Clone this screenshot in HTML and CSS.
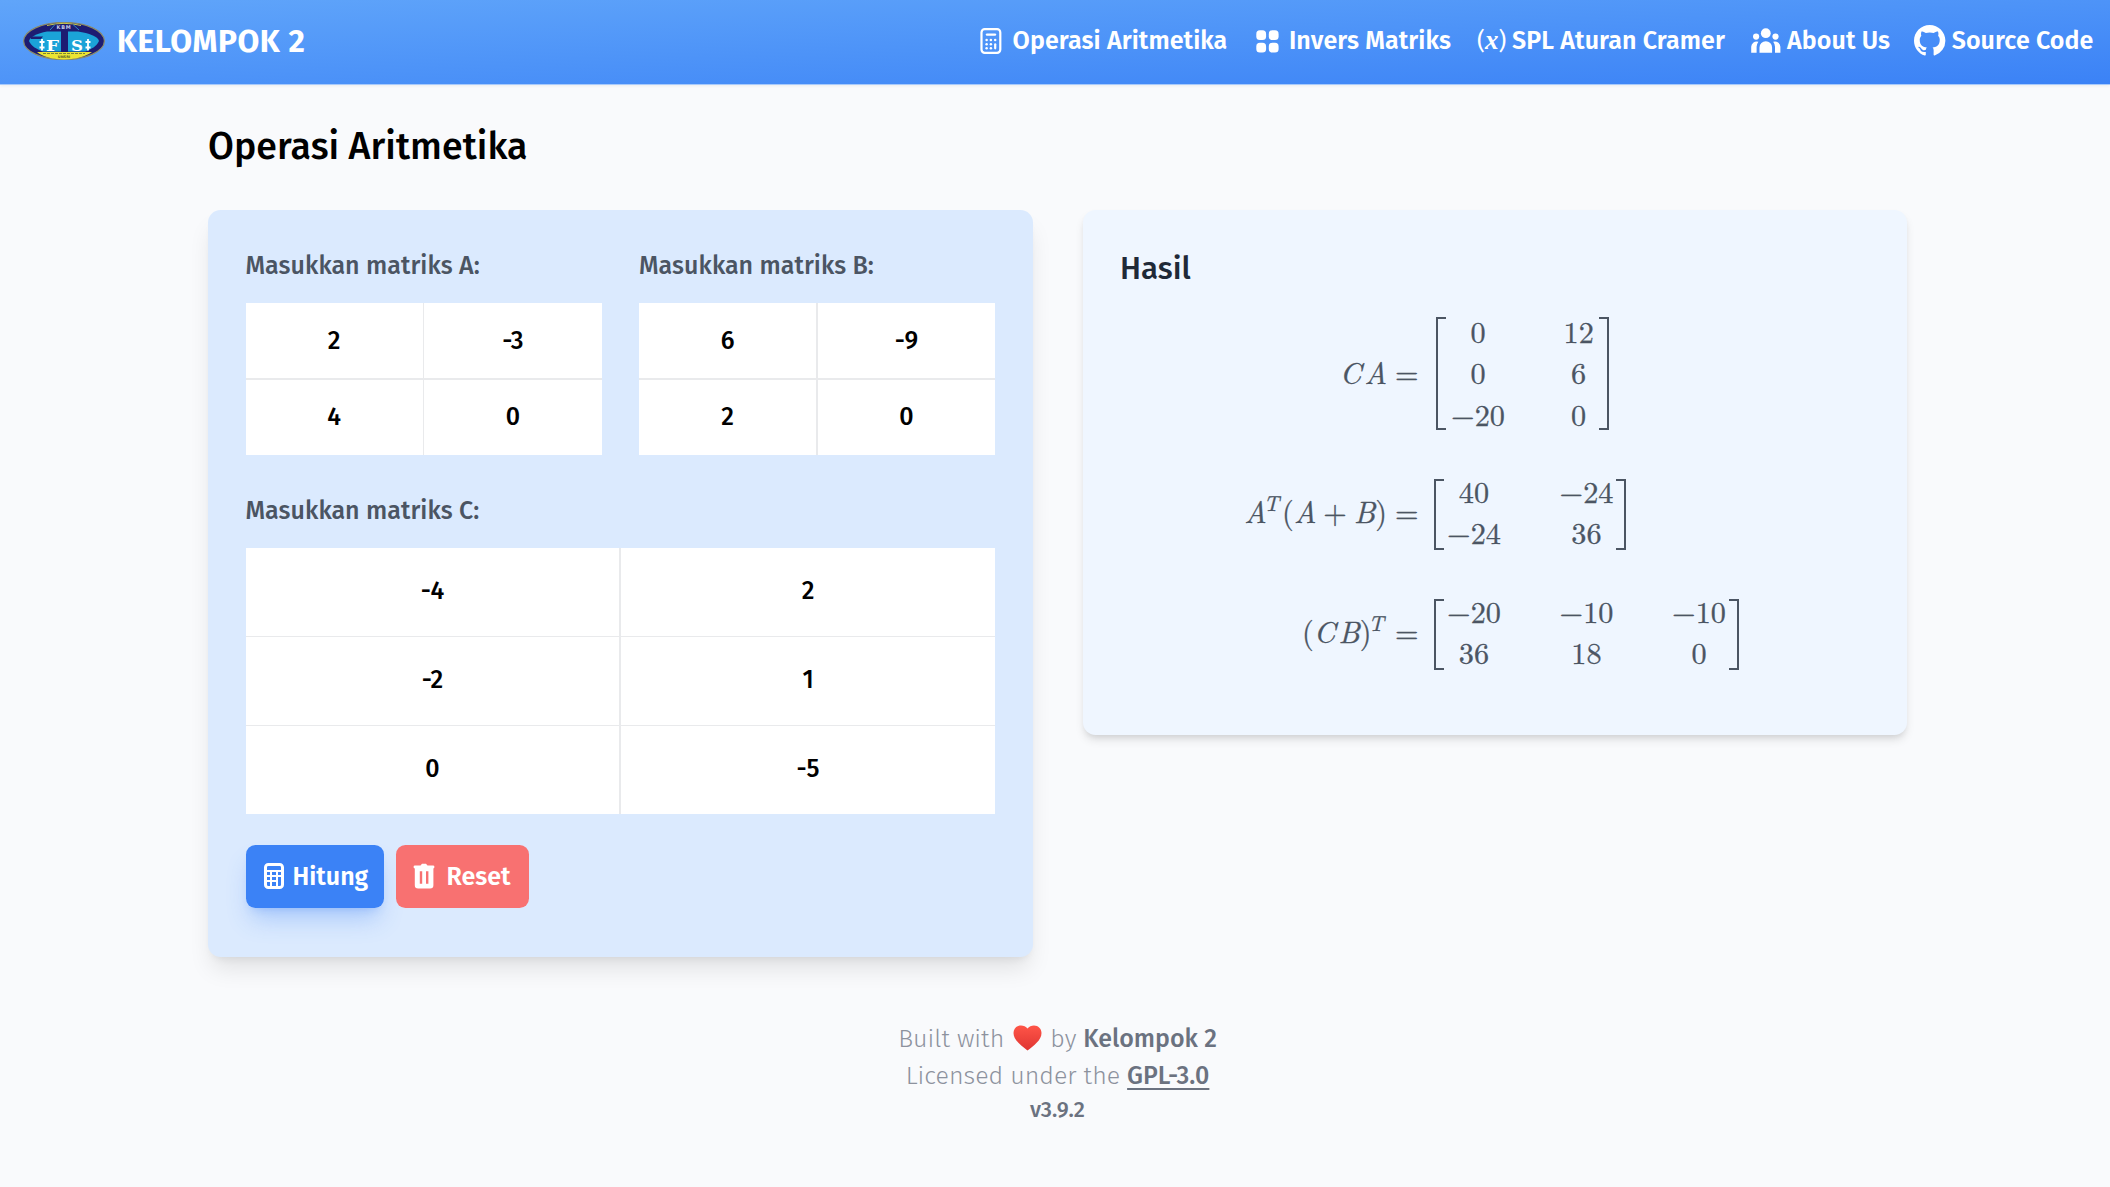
FILE: index.html
```html
<!DOCTYPE html>
<html lang="id">
<head>
<meta charset="utf-8">
<title>Operasi Aritmetika</title>
<link rel="stylesheet" href="styles.css">
</head>
<body>
<header class="nav">
  <a class="brand">
    <svg class="logo" viewBox="0 0 82 38">
      <ellipse cx="41" cy="19" rx="40.4" ry="18.6" fill="#1d1c72" stroke="#8b8a68" stroke-width="1.2"/>
      <path d="M24 3.5Q41-.8 58 3.500" fill="none" stroke="#c9c94a" stroke-width="1"/>
      <path d="M24 9.500C14 11.500 7 15 6 19c2 5 8 8.500 14 10.500h18V9.500z" fill="#1ba3d8"/>
      <path d="M45 9.500h10c11 1.500 20 5 21 9.500-2 5-8 8.500-14 10.500H45z" fill="#1ba3d8"/>
      <path d="M8 14.500h12l-2 2.500H8z" fill="#1d1c72"/>
      <path d="M27 8L32 2.500M56 8L50 2.500" stroke="#2d88c8" stroke-width="1"/>
      <path d="M14 30h55C61 35.500 51 37.400 41 37.400S21 35.500 14 30z" fill="#ece533"/>
      <path d="M20 31.500h42" stroke="#7b8535" stroke-width="1.200" stroke-dasharray="3 1"/>
      <path d="M38 8h7v21.500h-7z" fill="#1d1c72"/>
      <path d="M19 17v11.500M65 17v11.500" stroke="#fff" stroke-width="1.800"/>
      <path d="M16.500 20h5M16.500 25.500h5M62.500 20h5M62.500 25.500h5" stroke="#fff" stroke-width="2"/>
      <text class="logo-top" x="41" y="7.300">KBM</text>
      <text class="logo-letter" x="29.500" y="28.500" textLength="13" lengthAdjust="spacingAndGlyphs">F</text>
      <text class="logo-letter" x="54" y="28.500" textLength="12" lengthAdjust="spacingAndGlyphs">S</text>
      <text class="logo-bottom" x="41" y="36.300">UNSRI</text>
    </svg>
    <span class="brand-name">KELOMPOK 2</span>
  </a>
  <nav class="links">
    <a class="link link-calc">
      <svg width="22" height="26" viewBox="0 0 22 26"><rect x="1.500" y="1.200" width="18.800" height="23.600" rx="3.200" fill="none" stroke="#fff" stroke-width="2.200"/><path d="M7 6.600h8" stroke="#fff" stroke-width="2.400" stroke-linecap="round"/><g fill="#fff"><circle cx="6.600" cy="12" r="1.250"/><circle cx="10.900" cy="12" r="1.250"/><circle cx="15.200" cy="12" r="1.250"/><circle cx="6.600" cy="16.200" r="1.250"/><circle cx="10.900" cy="16.200" r="1.250"/><circle cx="6.600" cy="20.300" r="1.250"/><circle cx="10.900" cy="20.300" r="1.250"/></g><path d="M15.200 16.300v4" stroke="#fff" stroke-width="2.200" stroke-linecap="round"/></svg>
      <span>Operasi Aritmetika</span>
    </a>
    <a class="link link-grid">
      <svg width="23" height="23" viewBox="0 0 23 23" fill="#fff"><rect x=".3" y=".3" width="9.800" height="9.800" rx="3.600"/><rect x="12.800" y=".3" width="9.800" height="9.800" rx="3.600"/><rect x=".3" y="12.800" width="9.800" height="9.800" rx="3.600"/><rect x="12.800" y="12.800" width="9.800" height="9.800" rx="3.600"/></svg>
      <span>Invers Matriks</span>
    </a>
    <a class="link link-x">
      <span class="fx">(<i>x</i>)</span>
      <span>SPL Aturan Cramer</span>
    </a>
    <a class="link link-users">
      <svg width="30" height="26" viewBox="0 0 30 26" fill="#fff"><circle cx="14.800" cy="5.200" r="4.900"/><circle cx="5.100" cy="8.600" r="3.100"/><circle cx="24.500" cy="8.600" r="3.100"/><path d="M8.500 24.800v-5.300a6.300 6.300 0 0 1 12.600 0v5.300z"/><path d="M.2 24.800v-6a5.400 5.400 0 0 1 7.200-5 9 9 0 0 0-1.800 5v6zM29.400 24.800v-6a5.400 5.400 0 0 0-7.200-5 9 9 0 0 1 1.800 5v6z"/></svg>
      <span>About Us</span>
    </a>
    <a class="link link-git">
      <svg width="31.400" height="31.400" viewBox="0 0 16 16" fill="#fff"><path d="M8 0C3.580 0 0 3.580 0 8c0 3.540 2.290 6.530 5.470 7.590.4.070.55-.17.55-.38 0-.19-.01-.82-.01-1.490-2.010.37-2.530-.49-2.690-.94-.09-.23-.48-.94-.82-1.130-.28-.15-.68-.52-.01-.53.63-.01 1.080.58 1.230.82.72 1.210 1.870.87 2.330.66.070-.52.280-.87.510-1.070-1.780-.2-3.640-.89-3.640-3.950 0-.87.310-1.590.82-2.150-.08-.2-.36-1.020.08-2.120 0 0 .67-.21 2.200.82.640-.18 1.320-.27 2-.27s1.360.09 2 .27c1.530-1.040 2.200-.82 2.200-.82.440 1.100.160 1.920.080 2.120.51.560.820 1.270.820 2.150 0 3.070-1.870 3.750-3.650 3.950.29.250.54.730.54 1.480 0 1.070-.01 1.930-.01 2.200 0 .21.150.46.550.38A8.010 8.010 0 0 0 16 8c0-4.420-3.580-8-8-8z"/></svg>
      <span>Source Code</span>
    </a>
  </nav>
</header>

<main class="page">
  <h1>Operasi Aritmetika</h1>
  <div class="columns">
    <form class="card card-input">
      <div class="pair">
        <section>
          <h2>Masukkan matriks A:</h2>
          <div class="matrix small"><span>2</span><span>-3</span><span>4</span><span>0</span></div>
        </section>
        <section>
          <h2>Masukkan matriks B:</h2>
          <div class="matrix small"><span>6</span><span>-9</span><span>2</span><span>0</span></div>
        </section>
      </div>
      <section class="wide">
        <h2>Masukkan matriks C:</h2>
        <div class="matrix large"><span>-4</span><span>2</span><span>-2</span><span>1</span><span>0</span><span>-5</span></div>
      </section>
      <div class="actions">
        <button type="button" class="btn primary">
          <svg width="20" height="26" viewBox="0 0 20 26"><rect x="1.500" y="1.500" width="17" height="23" rx="2.800" fill="none" stroke="#fff" stroke-width="3"/><path d="M1.500 8h17M1.500 13h17M1.500 18h11.500M7 8v16M13 8v16" stroke="#fff" stroke-width="2" fill="none"/></svg>
          <span>Hitung</span>
        </button>
        <button type="button" class="btn danger">
          <svg width="22" height="26" viewBox="0 0 22 26"><path d="M7.500 2.500L9 .8h4l1.500 1.700H20a1.300 1.300 0 0 1 0 2.900H2A1.300 1.300 0 0 1 2 2.500z" fill="#fff"/><path fill-rule="evenodd" d="M1.800 5h18.600v17.200a3.300 3.300 0 0 1-3.300 3.300h-12a3.300 3.300 0 0 1-3.300-3.300zM6.800 8.300v12.500h2.400V8.300zM13 8.300v12.500h2.400V8.300z" fill="#fff"/></svg>
          <span>Reset</span>
        </button>
      </div>
    </form>

    <section class="card card-result">
      <h3>Hasil</h3>
      <div class="equations">
        <div class="equation tall">
          <div class="lhs"><i>C</i><i class="a">A</i><b class="eq">=</b></div>
          <div class="rhs two"><span>0</span><span>12</span><span>0</span><span>6</span><span><b>−</b>20</span><span>0</span></div>
        </div>
        <div class="equation">
          <div class="lhs"><i>A</i><sup>T</sup>(<i>A</i><b class="plus">+</b><i>B</i>)<b class="eq">=</b></div>
          <div class="rhs two"><span>40</span><span><b>−</b>24</span><span><b>−</b>24</span><span>36</span></div>
        </div>
        <div class="equation">
          <div class="lhs">(<i>C</i><i class="b">B</i>)<sup>T</sup><b class="eq">=</b></div>
          <div class="rhs three"><span><b>−</b>20</span><span><b>−</b>10</span><span><b>−</b>10</span><span>36</span><span>18</span><span>0</span></div>
        </div>
      </div>
    </section>
  </div>
</main>

<footer class="footer">
  <p>Built with <svg class="heart" width="29" height="26" viewBox="0 0 29 26"><defs><linearGradient id="h" x1="0" y1="0" x2="0" y2="1"><stop offset="0" stop-color="#ff5548"/><stop offset="1" stop-color="#df3532"/></linearGradient></defs><path d="M14.500 3.600C16 1.500 18.500.4 21 .4c4.300 0 7.500 3.200 7.500 7.600 0 7.300-7.700 12.500-14 17.600C8.200 20.500.5 15.300.5 8 .5 3.600 3.700.4 8 .4c2.500 0 5 1.100 6.500 3.200z" fill="url(#h)"/></svg> by <strong>Kelompok 2</strong></p>
  <p class="license">Licensed under the <a>GPL-3.0</a></p>
  <p class="version">v3.9.2</p>
</footer>
</body>
</html>
```
FILE: styles.css
```css
* { box-sizing: border-box; }
body { margin: 0; background: #f9fafc; font-family: "Fira Sans", "Noto Sans", sans-serif; font-size: 25px; line-height: 37.5px; color: #000; }
h1, h2, h3, p { margin: 0; }

.nav { display: flex; justify-content: space-between; align-items: center; height: 85px; padding: 0 16.500px 2px 23px; color: #fff; background: linear-gradient(to bottom right, #60a5fa, #3b82f6); border-bottom: 1px solid #a8cafb; box-shadow: 0 1px 3px rgba(0, 0, 0, .06); font-weight: 600; white-space: nowrap; }
.brand { display: flex; align-items: center; gap: 12px; }
.logo { width: 82px; height: 38px; }
.logo text { fill: #fff; text-anchor: middle; }
.logo .logo-letter { font: bold 15px "DejaVu Serif", serif; }
.logo .logo-top { font: bold 5px "DejaVu Sans", sans-serif; letter-spacing: .8px; fill: #c8cbe8; }
.logo .logo-bottom { font: bold 3.500px "DejaVu Sans", sans-serif; fill: #55602a; }
.brand-name { padding-top: 1px; font-size: 31.600px; font-weight: 700; letter-spacing: .6px; }
.links { display: flex; align-items: center; letter-spacing: .1px; }
.link { display: flex; align-items: center; }
.link span { padding-top: 1px; }
.link svg { display: block; }
.link-calc { gap: 10.500px; }
.link-grid { gap: 10px; margin-left: 28.500px; }
.link-x { gap: 8px; margin-left: 26px; }
.link-users { gap: 6.500px; margin-left: 25.500px; }
.link-git { gap: 6px; margin-left: 24.200px; }
.fx { display: flex; align-items: baseline; width: 27px; justify-content: space-between; font-size: 24px; font-weight: 400; }
.fx i { font-family: "Liberation Serif", serif; font-size: 27px; font-weight: bold; line-height: 20px; }

.page { width: 1699px; margin: 38px 0 0 208px; }
h1 { font-size: 37.500px; line-height: 47px; font-weight: 500; letter-spacing: .05px; }
.columns { display: flex; align-items: flex-start; gap: 50px; margin-top: 39.500px; }
.card { flex: 1; padding: 38px 37.500px 37.500px; border-radius: 12.500px; }
.card-input { height: 747.500px; background: #dbeafe; box-shadow: 0 15.600px 23.400px -4.700px rgba(0, 0, 0, .1), 0 6.250px 9.400px -6.250px rgba(0, 0, 0, .1); }
.card-result { height: 525.500px; padding-top: 37px; background: #eff6ff; box-shadow: 0 6.250px 9.400px -1.600px rgba(0, 0, 0, .1), 0 3.100px 6.250px -3.100px rgba(0, 0, 0, .1); }
.pair { display: grid; grid-template-columns: 1fr 1fr; gap: 37.500px; }
h2 { font-size: 25px; line-height: 37.500px; font-weight: 500; color: #4b5563; margin-bottom: 18px; letter-spacing: .05px; }
.wide { margin-top: 38px; }
.matrix { display: grid; grid-template-columns: 1fr 1fr; gap: 1.600px; background: #e9eaec; font-weight: 500; text-align: center; }
.matrix span { background: #fff; padding-top: 1.500px; }
.small span { line-height: 73.500px; }
.matrix.large span { padding: 0 0 .5px; line-height: 87.100px; }
.actions { display: flex; gap: 12.500px; margin-top: 31px; }
.btn { display: flex; align-items: center; height: 62.500px; padding: 0 15px 0 18.500px; border: 0; border-radius: 9.400px; color: #fff; font: 600 25px "Fira Sans", sans-serif; }
.btn span { padding-top: 1px; }
.primary { width: 138px; gap: 8.500px; background: #3b82f6; box-shadow: 0 15.600px 23.400px -4.700px rgba(59, 130, 246, .3), 0 6.250px 9.400px -6.250px rgba(59, 130, 246, .3); }
.danger { width: 133px; gap: 11.500px; padding-left: 17px; background: #f87171; }

h3 { font-size: 31.250px; line-height: 43.750px; font-weight: 500; color: #1f2937; }
.equations { margin-top: 27px; color: #4b5563; font-family: "KaTeX_Main", "Latin Modern Roman", "CMU Serif", "Liberation Serif", serif; font-size: 30.250px; line-height: 41.500px; -webkit-text-stroke: .3px #4b5563; }
.equation { display: grid; grid-template-columns: 298.500px 1fr; column-gap: 15.500px; align-items: center; height: 71px; margin-bottom: 49px; }
.equation b { display: inline-block; width: .778em; text-align: center; font-weight: 400; }
.lhs { padding-bottom: 7px; text-align: right; white-space: nowrap; }
.lhs i { font-style: italic; }
.lhs .a, .lhs .b { margin-left: 3px; }
.lhs sup { font-size: 21.500px; font-style: italic; line-height: 0; vertical-align: 12.500px; margin: 0 3px 0 -3px; }
.lhs .eq { margin-left: 8px; }
.lhs .plus { margin: 0 7px; }
.rhs { display: grid; grid-template-columns: 54px 54px; column-gap: 58.500px; justify-self: start; height: 71px; padding: 0 10.500px 6px 11px; align-content: center; text-align: center; white-space: nowrap; background: linear-gradient(#4b5563, #4b5563) left top / 8px 2px, linear-gradient(#4b5563, #4b5563) left bottom / 8px 2px, linear-gradient(#4b5563, #4b5563) right top / 8px 2px, linear-gradient(#4b5563, #4b5563) right bottom / 8px 2px; background-repeat: no-repeat; border: solid #4b5563; border-width: 0 2px; }
.three { grid-template-columns: 54px 54px 54px; }
.equation.tall { height: 113px; margin-bottom: 48.500px; }
.tall .lhs { padding-bottom: 5px; }
.tall .rhs { height: 113px; grid-template-columns: 54px 30px; padding: 0 13.500px 4px; margin-left: 1.500px; }

.footer { width: 1699px; margin: 64px 0 0 208px; text-align: center; font-weight: 300; color: #8d929e; }
.footer strong, .footer a, .version { font-weight: 500; color: #6b7280; }
.footer a { text-decoration: underline; text-decoration-thickness: 2px; text-underline-offset: 4px; }
.heart { vertical-align: -4px; margin: 0 1.500px; }
.license { margin-top: -1px; }
.version { font-size: 21.900px; line-height: 31px; }
```
